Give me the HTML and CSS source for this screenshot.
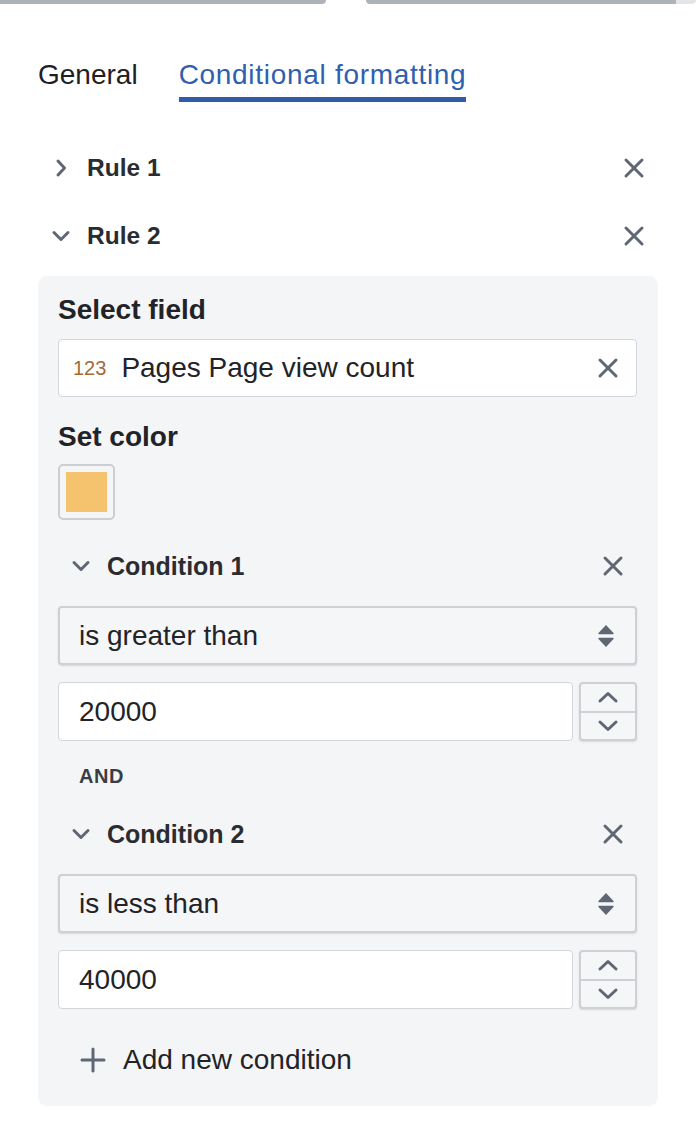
FILE: index.html
```html
<!DOCTYPE html>
<html>
<head>
<meta charset="utf-8">
<link rel="stylesheet" href="styles.css">
</head>
<body>
<div class="topbar">
  <div class="tb-left"></div>
  <div class="tb-gap"></div>
  <div class="tb-right"></div>
  <div class="tb-end"></div>
</div>
<div class="page">
  <div class="tabs">
    <div class="tab">General</div>
    <div class="tab active">Conditional formatting</div>
  </div>

  <div class="rules">
    <div class="rule-row">
      <svg class="chev-r" width="14" height="20" viewBox="0 0 14 20"><path d="M4 3 L10.5 10 L4 17" fill="none" stroke="#5f6674" stroke-width="3" stroke-linecap="round" stroke-linejoin="round"/></svg>
      <span class="rule-title">Rule 1</span>
      <svg class="x" width="22" height="22" viewBox="0 0 22 22"><path d="M3 3 L19 19 M19 3 L3 19" stroke="#5f6674" stroke-width="3" stroke-linecap="round"/></svg>
    </div>
    <div class="rule-row">
      <svg class="chev-d" width="20" height="14" viewBox="0 0 20 14"><path d="M3 3.5 L10 10.5 L17 3.5" fill="none" stroke="#5f6674" stroke-width="3" stroke-linecap="round" stroke-linejoin="round"/></svg>
      <span class="rule-title">Rule 2</span>
      <svg class="x" width="22" height="22" viewBox="0 0 22 22"><path d="M3 3 L19 19 M19 3 L3 19" stroke="#5f6674" stroke-width="3" stroke-linecap="round"/></svg>
    </div>
  </div>

  <div class="panel">
    <div class="label">Select field</div>
    <div class="field">
      <span class="num-ico">123</span>
      <span class="field-text">Pages Page view count</span>
      <svg class="x" width="22" height="22" viewBox="0 0 22 22"><path d="M3 3 L19 19 M19 3 L3 19" stroke="#5f6674" stroke-width="3" stroke-linecap="round"/></svg>
    </div>
    <div class="label label-color">Set color</div>
    <div class="swatch"><div class="swatch-fill"></div></div>

    <div class="cond-row first">
      <svg class="chev-d" width="20" height="14" viewBox="0 0 20 14"><path d="M3 3.5 L10 10.5 L17 3.5" fill="none" stroke="#5f6674" stroke-width="3" stroke-linecap="round" stroke-linejoin="round"/></svg>
      <span class="cond-title">Condition 1</span>
      <svg class="x" width="22" height="22" viewBox="0 0 22 22"><path d="M3 3 L19 19 M19 3 L3 19" stroke="#5f6674" stroke-width="3" stroke-linecap="round"/></svg>
    </div>
    <div class="select">
      <span>is greater than</span>
      <svg width="20" height="26" viewBox="0 0 20 26"><path d="M10 2 L17.5 10 Q18.2 11.2 16.8 11.2 L3.2 11.2 Q1.8 11.2 2.5 10 Z" fill="#5f6674"/><path d="M10 24 L17.5 16 Q18.2 14.8 16.8 14.8 L3.2 14.8 Q1.8 14.8 2.5 16 Z" fill="#5f6674"/></svg>
    </div>
    <div class="num-row">
      <div class="num-input">20000</div>
      <div class="spinner">
        <div class="spin"><svg width="22" height="14" viewBox="0 0 22 14"><path d="M3 11 L11 3.5 L19 11" fill="none" stroke="#5f6674" stroke-width="3" stroke-linecap="round" stroke-linejoin="round"/></svg></div>
        <div class="spin spin-down"><svg width="22" height="14" viewBox="0 0 22 14"><path d="M3 3 L11 10.5 L19 3" fill="none" stroke="#5f6674" stroke-width="3" stroke-linecap="round" stroke-linejoin="round"/></svg></div>
      </div>
    </div>

    <div class="and">AND</div>

    <div class="cond-row second">
      <svg class="chev-d" width="20" height="14" viewBox="0 0 20 14"><path d="M3 3.5 L10 10.5 L17 3.5" fill="none" stroke="#5f6674" stroke-width="3" stroke-linecap="round" stroke-linejoin="round"/></svg>
      <span class="cond-title">Condition 2</span>
      <svg class="x" width="22" height="22" viewBox="0 0 22 22"><path d="M3 3 L19 19 M19 3 L3 19" stroke="#5f6674" stroke-width="3" stroke-linecap="round"/></svg>
    </div>
    <div class="select">
      <span>is less than</span>
      <svg width="20" height="26" viewBox="0 0 20 26"><path d="M10 2 L17.5 10 Q18.2 11.2 16.8 11.2 L3.2 11.2 Q1.8 11.2 2.5 10 Z" fill="#5f6674"/><path d="M10 24 L17.5 16 Q18.2 14.8 16.8 14.8 L3.2 14.8 Q1.8 14.8 2.5 16 Z" fill="#5f6674"/></svg>
    </div>
    <div class="num-row">
      <div class="num-input">40000</div>
      <div class="spinner">
        <div class="spin"><svg width="22" height="14" viewBox="0 0 22 14"><path d="M3 11 L11 3.5 L19 11" fill="none" stroke="#5f6674" stroke-width="3" stroke-linecap="round" stroke-linejoin="round"/></svg></div>
        <div class="spin spin-down"><svg width="22" height="14" viewBox="0 0 22 14"><path d="M3 3 L11 10.5 L19 3" fill="none" stroke="#5f6674" stroke-width="3" stroke-linecap="round" stroke-linejoin="round"/></svg></div>
      </div>
    </div>

    <div class="add">
      <svg width="26" height="26" viewBox="0 0 26 26"><path d="M13 2 L13 24 M2 13 L24 13" stroke="#5f6674" stroke-width="3" stroke-linecap="round"/></svg>
      <span>Add new condition</span>
    </div>
  </div>
</div>
</body>
</html>
```

FILE: styles.css
```css
* { box-sizing: border-box; }
html, body { margin: 0; padding: 0; background: #ffffff; }
body {
  font-family: "Liberation Sans", Arial, sans-serif;
  color: #2a2c31;
  width: 698px;
  height: 1126px;
  overflow: hidden;
}

.topbar {
  display: flex;
  height: 4px;
}
.tb-left {
  width: 326px;
  background: #aeb2b9;
  border-bottom-right-radius: 6px;
}
.tb-gap { width: 40px; }
.tb-right {
  width: 310px;
  background: #aeb2b9;
  border-bottom-left-radius: 6px;
}
.tb-end {
  width: 20px;
  background: #e3e5e8;
  border-bottom-right-radius: 6px;
}

.page {
  padding: 0 40px 0 38px;
}

.tabs {
  display: flex;
  gap: 41px;
  margin-top: 54px;
  height: 44px;
}
.tab {
  font-family: "Liberation Sans", Arial, sans-serif;
  font-size: 28px;
  line-height: 34px;
  color: #1f2023;
}
.tab.active {
  color: #2f5fae;
  border-bottom: 5px solid #2f5dab;
  height: 44px;
  letter-spacing: 0.7px;
}

.rules {
  margin-top: 32px;
}
.rule-row {
  display: flex;
  align-items: center;
  height: 68px;
}
.rule-row .chev-r { margin-left: 16px; margin-right: 19px; }
.rule-row .chev-d { margin-left: 13px; margin-right: 16px; }
.rule-title {
  font-weight: bold;
  font-size: 24.5px;
  color: #2a2c31;
}
.rule-row .x { margin-left: auto; margin-right: 13px; }

.panel {
  margin-top: 6px;
  background: #f4f5f7;
  border-radius: 9px;
  padding: 18px 21px 26px 20px;
}

.label {
  font-weight: bold;
  font-size: 28px;
  line-height: 32px;
  color: #222327;
}
.field {
  margin-top: 13px;
  height: 58px;
  background: #fff;
  border: 1px solid #d3d6da;
  border-radius: 4px;
  display: flex;
  align-items: center;
  padding: 0 17px 0 14px;
}
.num-ico {
  font-size: 20px;
  color: #a36a34;
  margin-right: 15px;
}
.field-text {
  font-size: 28px;
  color: #222327;
}
.field .x { margin-left: auto; }

.label-color { margin-top: 24px; }

.swatch {
  margin-top: 11px;
  width: 57px;
  height: 56px;
  border: 2px solid #cbced3;
  border-radius: 5px;
  padding: 6px;
}
.swatch-fill {
  width: 100%;
  height: 100%;
  background: #f5c26e;
}

.cond-row {
  display: flex;
  align-items: center;
  height: 40px;
}
.cond-row.first { margin-top: 26px; }
.cond-row.second { margin-top: 28px; }
.cond-row .chev-d { margin-left: 13px; margin-right: 16px; }
.cond-title {
  font-weight: bold;
  font-size: 25px;
  color: #2a2c31;
}
.cond-row .x { margin-left: auto; margin-right: 13px; }

.select {
  margin-top: 20px;
  height: 59px;
  border: 2px solid #cdd0d5;
  border-radius: 4px;
  background: #f5f6f8;
  box-shadow: 0 1px 2px rgba(0,0,0,0.12);
  display: flex;
  align-items: center;
  justify-content: space-between;
  padding: 0 19px 0 19px;
  font-size: 28px;
  color: #222327;
}

.num-row {
  margin-top: 17px;
  display: flex;
  gap: 6px;
  height: 59px;
}
.num-input {
  flex: 1;
  background: #fff;
  border: 1px solid #d3d6da;
  border-radius: 4px;
  display: flex;
  align-items: center;
  padding-left: 20px;
  font-size: 28px;
  color: #222327;
}
.spinner {
  width: 58px;
  border: 2px solid #cdd0d5;
  border-radius: 4px;
  background: #f5f6f8;
  box-shadow: 0 1px 2px rgba(0,0,0,0.12);
  display: flex;
  flex-direction: column;
}
.spin {
  flex: 1;
  display: flex;
  align-items: center;
  justify-content: center;
}
.spin-down { border-top: 2px solid #cdd0d5; }

.and {
  margin-top: 25px;
  margin-left: 21px;
  font-size: 20px;
  line-height: 20px;
  font-weight: bold;
  letter-spacing: 0.5px;
  color: #3a3d44;
}

.add {
  margin-top: 31px;
  height: 40px;
  display: flex;
  align-items: center;
  padding-left: 22px;
  gap: 17px;
  font-size: 28px;
  color: #222327;
}
```
